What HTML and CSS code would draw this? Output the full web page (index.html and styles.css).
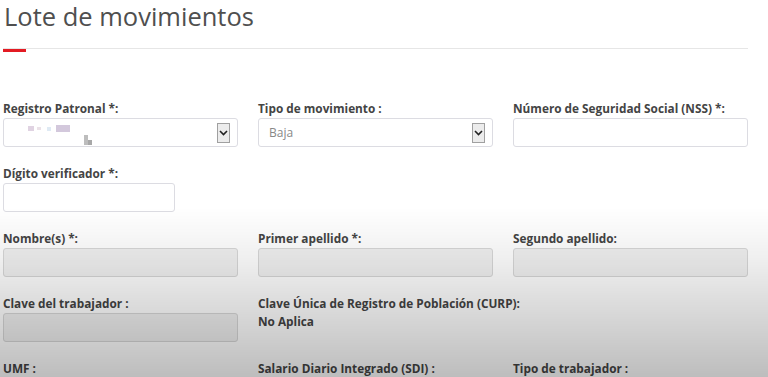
FILE: index.html
```html
<!DOCTYPE html>
<html lang="es">
<head>
    <meta charset="UTF-8">
    <meta name="viewport" content="width=device-width, initial-scale=1.0">
    <title>Lote de movimientos</title>
    <link rel="stylesheet" href="styles.css">
</head>
<body>
    <div class="page">
        <h1>Lote de movimientos</h1>
        <div class="divider"><div class="accent"></div></div>

        <div class="form">
            <div class="field">
                <label>Registro Patronal *:</label>
                <div class="select">
                    <span class="blur">
                        <i class="b1"></i><i class="b2"></i><i class="b3"></i><i class="b4"></i>
                        <i class="b5"></i><i class="b6"></i>
                    </span>
                    <span class="arrow"><svg width="9" height="6" viewBox="0 0 9 6"><path d="M1 1l3.5 3.5L8 1" fill="none" stroke="#222" stroke-width="1.6"/></svg></span>
                </div>
            </div>
            <div class="field">
                <label>Tipo de movimiento :</label>
                <div class="select">
                    <span class="value">Baja</span>
                    <span class="arrow"><svg width="9" height="6" viewBox="0 0 9 6"><path d="M1 1l3.5 3.5L8 1" fill="none" stroke="#222" stroke-width="1.6"/></svg></span>
                </div>
            </div>
            <div class="field">
                <label>Número de Seguridad Social (NSS) *:</label>
                <input type="text">
            </div>

            <div class="field">
                <label>Dígito verificador *:</label>
                <input type="text" class="short">
            </div>
            <div class="field"></div>
            <div class="field"></div>

            <div class="field">
                <label>Nombre(s) *:</label>
                <input type="text" disabled>
            </div>
            <div class="field">
                <label>Primer apellido *:</label>
                <input type="text" disabled>
            </div>
            <div class="field">
                <label>Segundo apellido:</label>
                <input type="text" disabled>
            </div>

            <div class="field">
                <label>Clave del trabajador :</label>
                <input type="text" disabled>
            </div>
            <div class="field">
                <label>Clave Única de Registro de Población (CURP):</label>
                <div class="static">No Aplica</div>
            </div>
            <div class="field"></div>

            <div class="field">
                <label>UMF :</label>
            </div>
            <div class="field">
                <label>Salario Diario Integrado (SDI) :</label>
            </div>
            <div class="field">
                <label>Tipo de trabajador :</label>
            </div>
        </div>
    </div>
    <div class="shade"></div>
</body>
</html>
```

FILE: styles.css
```css
body {
    margin: 0;
    font-family: "Open Sans", "Liberation Sans", sans-serif;
    background: #fff;
    overflow: hidden;
}
.page {
    width: 745px;
    padding-left: 3px;
}
h1 {
    margin: 0;
    padding-left: 1px;
    font-size: 25.5px;
    line-height: 33px;
    font-weight: normal;
    color: #4f4f4f;
    height: 48px;
}
.divider {
    border-top: 1px solid #e6e6e6;
}
.accent {
    width: 23px;
    height: 3px;
    background: #e31b23;
}
.form {
    display: grid;
    grid-template-columns: 235px 235px 235px;
    column-gap: 20px;
    margin-top: 48px;
}
.field {
    height: 65px;
}
label {
    display: block;
    font-size: 11.8px;
    line-height: 17px;
    font-weight: bold;
    color: #444;
    white-space: nowrap;
    margin-bottom: 1px;
}
input, .select {
    box-sizing: border-box;
    width: 235px;
    height: 29px;
    margin: 0;
    border: 1px solid #dcdce2;
    border-radius: 3px;
    background: #fff;
    font-family: inherit;
}
input.short {
    width: 172px;
}
input:disabled {
    background: #f1f1f1;
    border-color: #d8d8d8;
}
.select {
    display: flex;
    align-items: center;
    justify-content: space-between;
    padding-left: 10px;
    padding-right: 7px;
}
.value {
    font-size: 12px;
    color: #888;
}
.arrow {
    box-sizing: border-box;
    width: 13px;
    height: 20px;
    border: 1px solid #a0a0a0;
    background: #ececec;
    display: flex;
    align-items: center;
    justify-content: center;
}
.static {
    font-size: 11.8px;
    line-height: 17px;
    font-weight: bold;
    color: #444;
}
.blur {
    position: relative;
    width: 90px;
    height: 27px;
}
.blur i {
    position: absolute;
    display: block;
    filter: blur(0.6px);
}
.b1 { left: 14px; top: 7px; width: 6px; height: 5px; background: #e0d3e2; }
.b2 { left: 23px; top: 8px; width: 4px; height: 3px; background: #ebe2e8; }
.b3 { left: 33px; top: 8px; width: 4px; height: 4px; background: #dfeaf4; }
.b4 { left: 42px; top: 6px; width: 14px; height: 7px; background: #d3c8dc; }
.b5 { left: 70px; top: 16px; width: 4px; height: 10px; background: #bdbdbd; }
.b6 { left: 74px; top: 21px; width: 4px; height: 5px; background: #a8a8a8; }
.shade {
    position: fixed;
    inset: 0;
    pointer-events: none;
    background: linear-gradient(to bottom, rgba(0, 0, 0, 0) 55%, rgba(0, 0, 0, 0.06) 68%, rgba(0, 0, 0, 0.26) 100%);
}
```
